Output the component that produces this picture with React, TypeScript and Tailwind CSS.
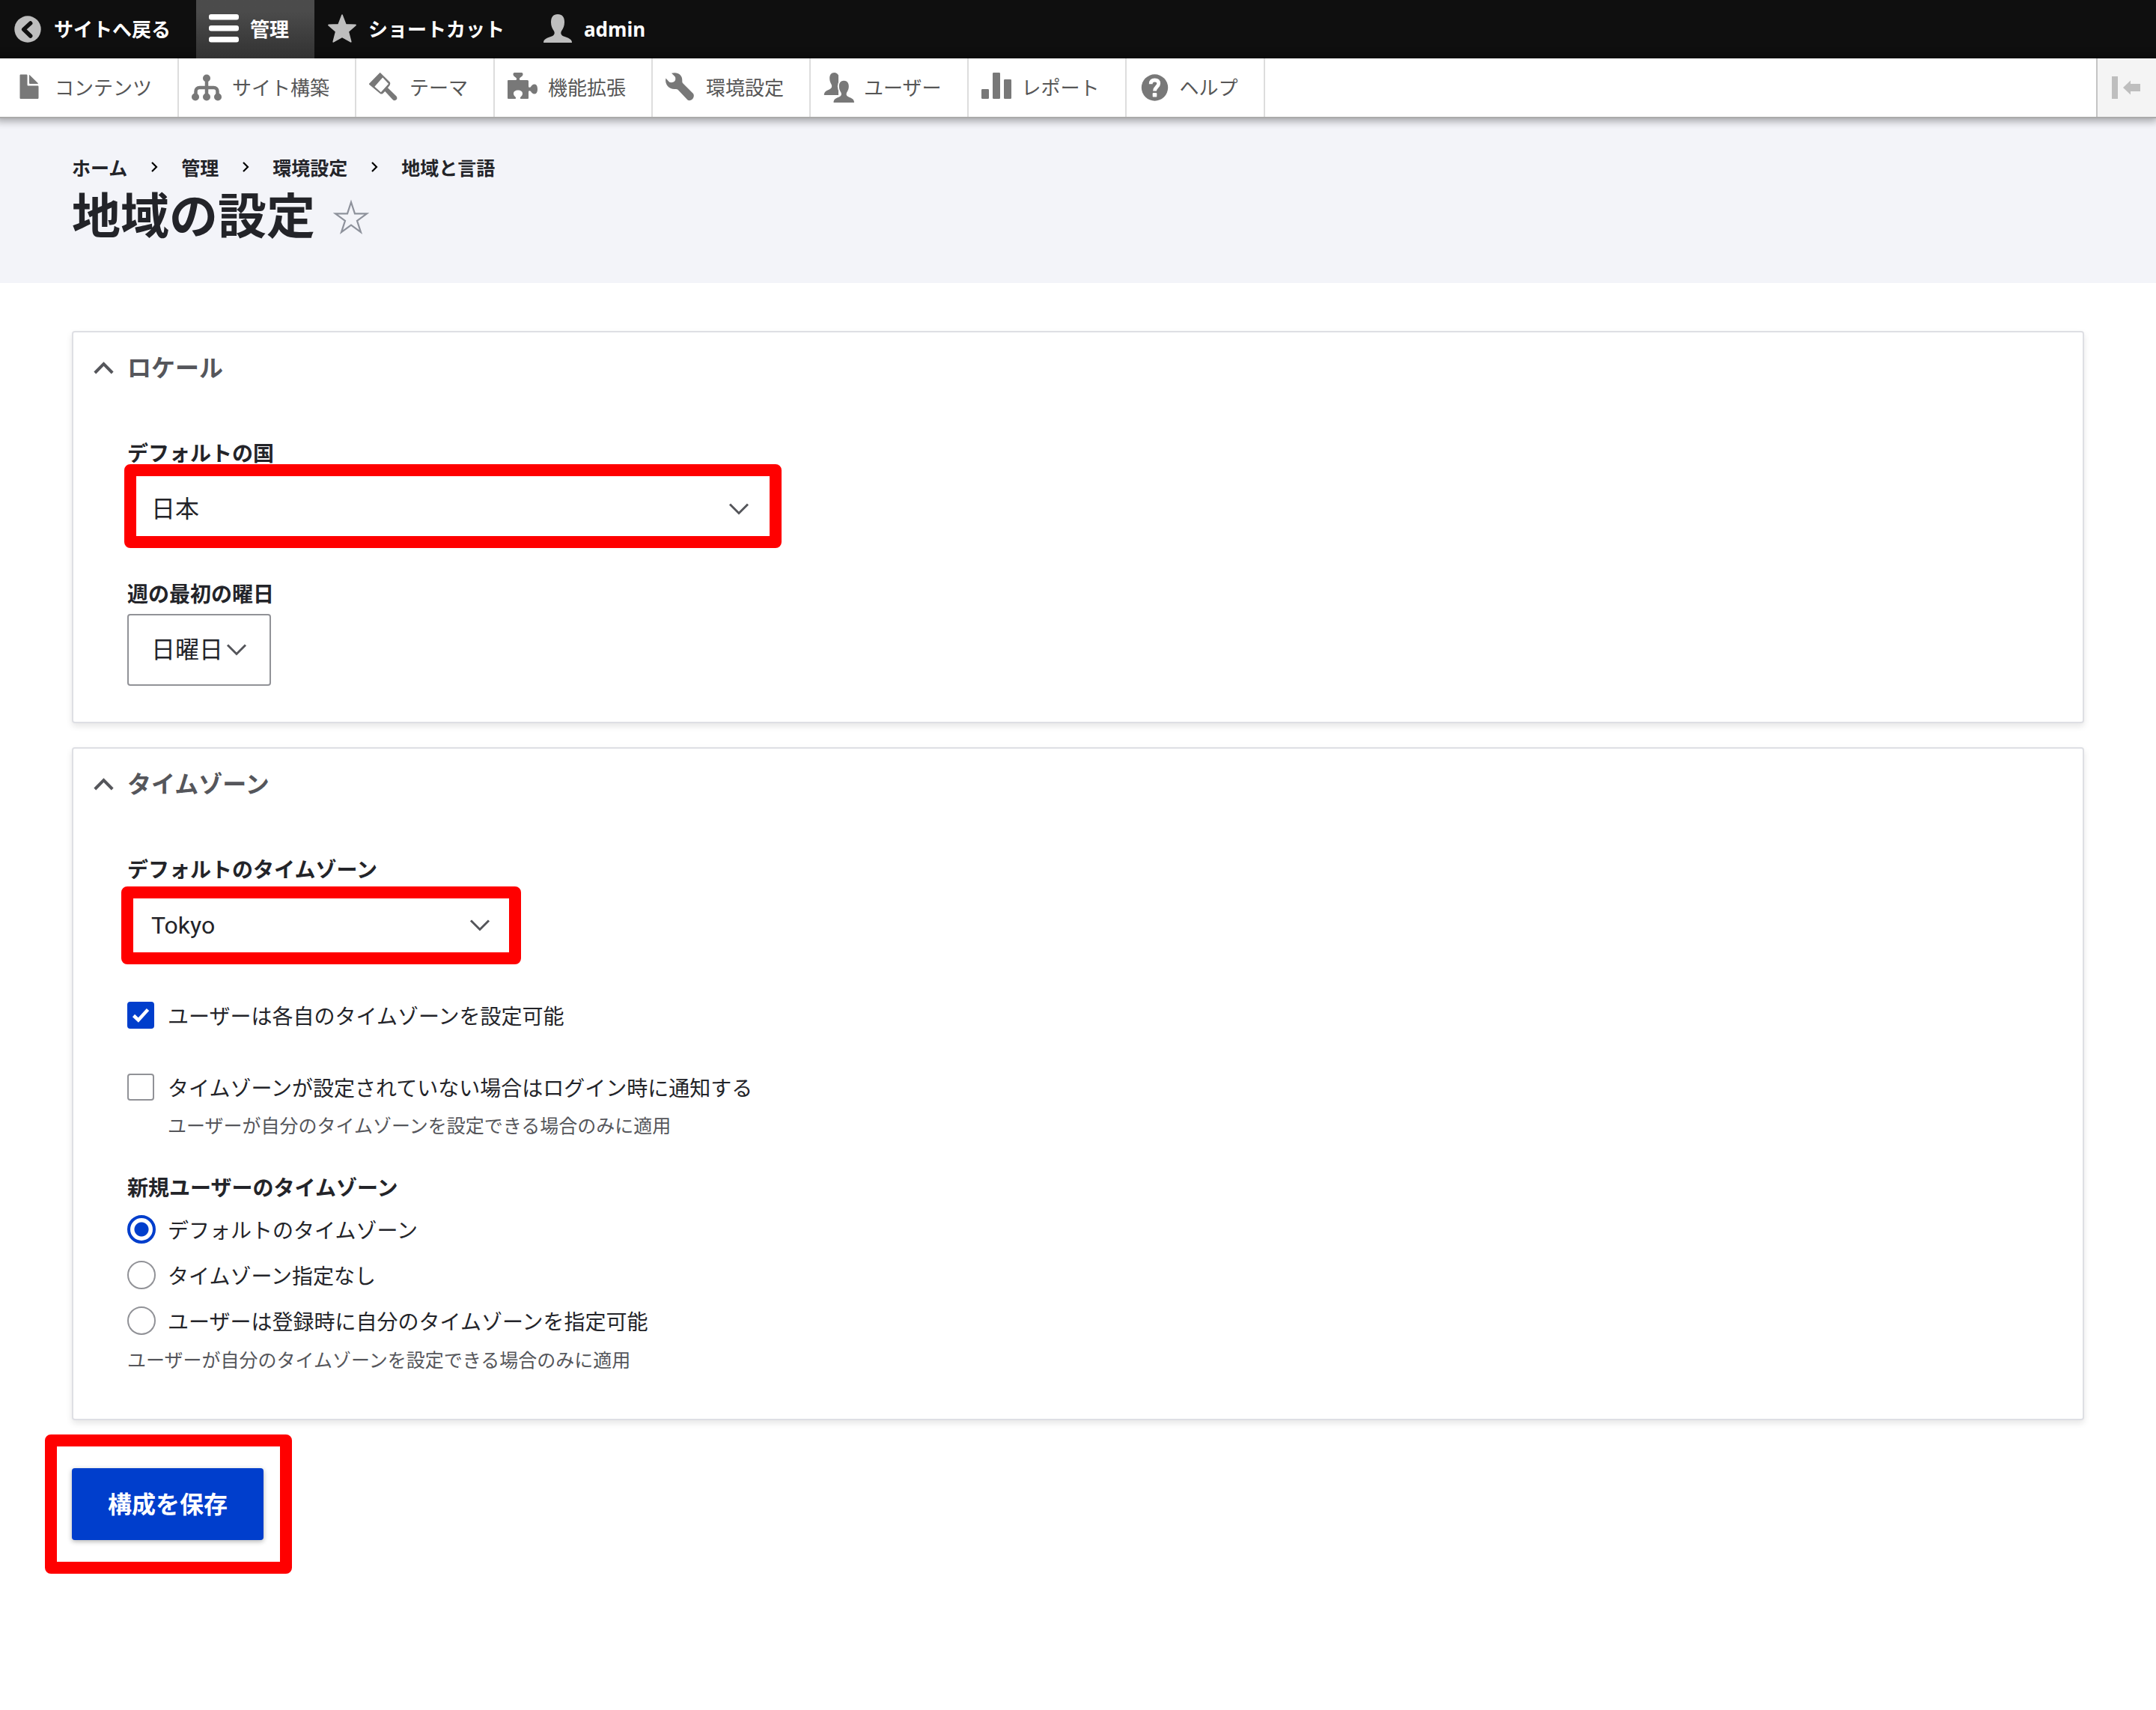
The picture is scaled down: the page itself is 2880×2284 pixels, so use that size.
import { useState } from "react";
import type { ReactNode } from "react";

const trayItems: { label: string; icon: ReactNode }[] = [
  { label: "コンテンツ", icon: <FileIcon /> },
  { label: "サイト構築", icon: <StructureIcon /> },
  { label: "テーマ", icon: <BrushIcon /> },
  { label: "機能拡張", icon: <PuzzleIcon /> },
  { label: "環境設定", icon: <WrenchIcon /> },
  { label: "ユーザー", icon: <PeopleIcon /> },
  { label: "レポート", icon: <BarsIcon /> },
  { label: "ヘルプ", icon: <HelpIcon /> },
];

const breadcrumbs = ["ホーム", "管理", "環境設定", "地域と言語"];

const userTimezoneOptions = [
  { value: "default", label: "デフォルトのタイムゾーン" },
  { value: "empty", label: "タイムゾーン指定なし" },
  { value: "select", label: "ユーザーは登録時に自分のタイムゾーンを指定可能" },
];

export default function App() {
  return (
    <div className="min-h-screen bg-white font-['Noto_Sans_CJK_JP',sans-serif] text-[#232429]">
      <Toolbar />
      <PageHeader />
      <main className="px-24 pt-16 pb-24">
        <form onSubmit={(e) => e.preventDefault()}>
          <div className="flex flex-col gap-8">
            <LocalePanel />
            <TimezonePanel />
          </div>
          <div className="relative mt-16 w-fit">
            <button
              type="submit"
              className="block h-24 rounded bg-[#003ecc] px-12 pb-1 text-[32px] font-bold text-white shadow-[0_2px_6px_rgba(0,0,0,0.3)]"
            >
              構成を保存
            </button>
            <Highlight className="-top-[45px] -right-[38px] -bottom-[45px] -left-9" />
          </div>
        </form>
      </main>
    </div>
  );
}

/* ---------- Toolbar ---------- */

function Toolbar() {
  return (
    <div className="relative z-10 font-['Noto_Sans','Noto_Sans_CJK_JP',sans-serif] text-[26px]">
      <nav className="flex h-[78px] bg-[#0f0f0f] font-bold text-white">
        <BarTab label="サイトへ戻る" icon={<BackIcon />} />
        <BarTab label="管理" icon={<HamburgerIcon />} active />
        <BarTab label="ショートカット" icon={<StarIcon />} />
        <BarTab label="admin" icon={<PersonIcon />} />
      </nav>
      <div className="flex border-b-2 border-[#aaaaaa] bg-white shadow-[-2px_0_10px_4px_rgba(0,0,0,0.33)]">
        <ul className="flex flex-1 pl-0.5">
          {trayItems.map((item) => (
            <li key={item.label} className="border-r-2 border-[#dddddd]">
              <a
                href="#"
                className="flex h-[78px] items-center gap-3.5 pr-[34px] pl-[17px] text-[#565656]"
              >
                <span className="text-[#787878]">{item.icon}</span>
                {item.label}
              </a>
            </li>
          ))}
        </ul>
        <button
          type="button"
          aria-label="垂直方向"
          className="flex w-20 items-center border-l-2 border-[#c4c4c4] bg-[#f4f4f4] pl-[19px]"
        >
          <svg width="40" height="30" viewBox="0 0 40 30" fill="#bebebe">
            <path d="M0 0h8v30H0zM15 15 25 5.5V10h13v10H25v4.5z" />
          </svg>
        </button>
      </div>
    </div>
  );
}

function BarTab({
  label,
  icon,
  active = false,
}: {
  label: string;
  icon: ReactNode;
  active?: boolean;
}) {
  return (
    <a
      href="#"
      className={`flex items-center gap-[15px] pr-[34px] pl-[17px] ${
        active
          ? "bg-linear-to-b from-[#4b4b4b] from-20% to-[#323232] text-white"
          : ""
      }`}
    >
      <span className={active ? "text-white" : "text-[#bebebe]"}>{icon}</span>
      {label}
    </a>
  );
}

/* ---------- Page header ---------- */

function PageHeader() {
  return (
    <header className="bg-[#f3f4f9] px-24 pt-[47px] pb-[51px]">
      <nav aria-label="パンくず">
        <ol className="flex h-9 items-center text-[25px] leading-9 font-bold">
          {breadcrumbs.map((crumb, i) => (
            <li key={crumb} className="flex items-center">
              {i > 0 && (
                <span className="flex w-18 justify-center">
                  <svg width="10" height="14" viewBox="0 0 10 14" fill="none">
                    <path d="m2 1 6 6-6 6" stroke="#000" strokeWidth="2.2" />
                  </svg>
                </span>
              )}
              <a href="#">{crumb}</a>
            </li>
          ))}
        </ol>
      </nav>
      <div className="flex items-center gap-6">
        <h1 className="text-[65px] leading-[86px] font-bold">地域の設定</h1>
        <a href="#" aria-label="ショートカットに追加" className="pt-3">
          <svg width="48" height="48" viewBox="0 0 48 48" fill="none">
            <path
              d="m24 4 5 15.3h16L32 28.8l5 15.3-13-9.5-13 9.5 5-15.3L3 19.3h16z"
              stroke="#8e929c"
              strokeWidth="2.2"
            />
          </svg>
        </a>
      </div>
    </header>
  );
}

/* ---------- Form panels ---------- */

function LocalePanel() {
  return (
    <Panel title="ロケール">
      <FieldLabel htmlFor="country">デフォルトの国</FieldLabel>
      <SelectBox id="country" value="日本" className="w-[863px]">
        <Highlight className="-top-3 -right-[11px] -bottom-1 -left-1" />
      </SelectBox>
      <div className="mt-[46px] mb-12">
        <FieldLabel htmlFor="first-day">週の最初の曜日</FieldLabel>
        <SelectBox id="first-day" value="日曜日" className="w-48" />
      </div>
    </Panel>
  );
}

function TimezonePanel() {
  const [configurable, setConfigurable] = useState(true);
  const [warn, setWarn] = useState(false);
  const [userTimezone, setUserTimezone] = useState("default");

  return (
    <Panel title="タイムゾーン">
      <FieldLabel htmlFor="timezone">デフォルトのタイムゾーン</FieldLabel>
      <SelectBox id="timezone" value="Tokyo" className="w-[517px]">
        <Highlight className="-top-1 -right-[9px] -bottom-1 -left-2" />
      </SelectBox>

      <div className="mt-[54px] flex flex-col gap-[60px]">
        <Checkbox
          label="ユーザーは各自のタイムゾーンを設定可能"
          checked={configurable}
          onChange={setConfigurable}
        />
        <Checkbox
          label="タイムゾーンが設定されていない場合はログイン時に通知する"
          checked={warn}
          onChange={setWarn}
        />
      </div>
      <p className="mt-3.5 pl-[54px] text-[25px] leading-9 text-[#55565b]">
        ユーザーが自分のタイムゾーンを設定できる場合のみに適用
      </p>

      <fieldset className="mt-[47px] mb-[62px]">
        <legend className="text-[28px] leading-9 font-bold">
          新規ユーザーのタイムゾーン
        </legend>
        <div className="mt-5 flex flex-col gap-[23px]">
          {userTimezoneOptions.map((option) => (
            <label
              key={option.value}
              className="flex h-[38px] w-fit items-center gap-4 text-[28px] leading-9"
            >
              <input
                type="radio"
                name="user-timezone"
                value={option.value}
                checked={userTimezone === option.value}
                onChange={() => setUserTimezone(option.value)}
                className="size-[38px] appearance-none rounded-full border-2 border-[#919297] bg-white checked:border-4 checked:border-[#003ecc] checked:bg-[radial-gradient(circle,#003ecc_9px,#ffffff_10px)]"
              />
              {option.label}
            </label>
          ))}
        </div>
        <p className="mt-3.5 text-[25px] leading-9 text-[#55565b]">
          ユーザーが自分のタイムゾーンを設定できる場合のみに適用
        </p>
      </fieldset>
    </Panel>
  );
}

function Panel({ title, children }: { title: string; children: ReactNode }) {
  return (
    <details
      open
      className="group rounded border-2 border-[#dedfe4] bg-white shadow-[0_4px_8px_rgba(0,0,0,0.1)]"
    >
      <summary className="flex list-none items-center gap-[18px] pl-[27px] text-[32px] leading-[90px] font-bold text-[#55565b]">
        <svg
          width="27"
          height="22"
          viewBox="0 0 27 22"
          fill="none"
          className="rotate-180 group-open:rotate-0"
        >
          <path d="M1.8 20 13.5 8.2 25.2 20" stroke="#55565b" strokeWidth="4" />
        </svg>
        {title}
      </summary>
      <div className="flow-root px-[72px] pt-[52px]">{children}</div>
    </details>
  );
}

function FieldLabel({
  htmlFor,
  children,
}: {
  htmlFor: string;
  children: ReactNode;
}) {
  return (
    <label htmlFor={htmlFor} className="block text-[28px] leading-9 font-bold">
      {children}
    </label>
  );
}

function SelectBox({
  id,
  value,
  className,
  children,
}: {
  id: string;
  value: string;
  className: string;
  children?: ReactNode;
}) {
  return (
    <div className={`relative mt-2.5 max-w-full ${className}`}>
      <select
        id={id}
        defaultValue={value}
        className="block h-24 w-full appearance-none rounded border-2 border-[#919297] bg-white pl-[30px] font-[Roboto,'Noto_Sans_CJK_JP',sans-serif] text-[32px]"
      >
        <option value={value}>{value}</option>
      </select>
      <svg
        width="28"
        height="16"
        viewBox="0 0 28 16"
        fill="none"
        className="pointer-events-none absolute top-10 right-8"
      >
        <path d="m2 1.5 12 12 12-12" stroke="#55565b" strokeWidth="3" />
      </svg>
      {children}
    </div>
  );
}

function Checkbox({
  label,
  checked,
  onChange,
}: {
  label: string;
  checked: boolean;
  onChange: (checked: boolean) => void;
}) {
  return (
    <label className="flex h-9 w-fit items-center gap-[18px] text-[28px] leading-9">
      <span className="relative size-9">
        <input
          type="checkbox"
          checked={checked}
          onChange={(e) => onChange(e.target.checked)}
          className="block size-9 appearance-none rounded border-2 border-[#919297] bg-white checked:border-[#003ecc] checked:bg-[#003ecc]"
        />
        {checked && (
          <svg
            viewBox="0 0 36 36"
            fill="none"
            className="pointer-events-none absolute inset-0"
          >
            <path d="m8.5 18.5 6.3 6 12.7-14" stroke="#fff" strokeWidth="4.5" />
          </svg>
        )}
      </span>
      {label}
    </label>
  );
}

// Red callout frame drawn over a control
function Highlight({ className }: { className: string }) {
  return (
    <div
      className={`pointer-events-none absolute rounded-lg border-16 border-[#ff0000] ${className}`}
    />
  );
}

/* ---------- Icons ---------- */

function Icon({ children }: { children: ReactNode }) {
  return (
    <svg width="40" height="40" viewBox="0 0 40 40" fill="currentColor" overflow="visible">
      {children}
    </svg>
  );
}

function BackIcon() {
  return (
    <Icon>
      <circle cx="20" cy="20" r="17.7" />
      <path
        d="m23.7 12-9 8.2 9 8.8"
        fill="none"
        stroke="#0f0f0f"
        strokeWidth="5.5"
        strokeLinejoin="round"
        strokeLinecap="round"
      />
    </Icon>
  );
}

function HamburgerIcon() {
  return (
    <Icon>
      <rect y="0" width="40" height="7.5" rx="3" />
      <rect y="15" width="40" height="7.5" rx="3" />
      <rect y="30" width="40" height="7.5" rx="3" />
    </Icon>
  );
}

function StarIcon() {
  return (
    <Icon>
      <path
        d="m20 1.2 4.8 12.6 13.2.7-9.8 8.7 3.5 13.6L20 30.3 8.3 36.8l3.5-13.6L2 14.5l13.2-.7z"
        stroke="currentColor"
        strokeWidth="1.8"
        strokeLinejoin="round"
      />
    </Icon>
  );
}

function PersonIcon() {
  return (
    <Icon>
      <path d="M20 0c-6 0-9 4-9 10.5 0 5 1.5 8 4 12 1.5 3 .5 5.5-3 7-6 2-11 3.5-11 8.5h38c0-5-5-6.5-11-8.5-3.500-1.5-4.500-4-3-7 2.5-4 4-7 4-12C29 4 26 0 20 0z" />
    </Icon>
  );
}

function FileIcon() {
  return (
    <Icon>
      <path
        transform="scale(2.5)"
        d="M12.502 7h-5c-.276 0-.502-.225-.502-.5v-5c0-.275-.225-.5-.5-.5h-3c-.275 0-.5.225-.5.5v12c0 .275.225.5.5.5h9.002c.275 0 .5-.225.5-.5v-6c0-.275-.225-.5-.5-.5zM8.502 6h4c.275 0 .34-.159.146-.354l-4.293-4.292c-.195-.195-.353-.129-.353.146v4c0 .275.225.5.5.5z"
      />
    </Icon>
  );
}

function StructureIcon() {
  return (
    <Icon>
      <circle cx="20" cy="7.5" r="5" />
      <circle cx="5" cy="32.5" r="5" />
      <circle cx="20" cy="32.5" r="5" />
      <circle cx="35" cy="32.5" r="5" />
      <path
        d="M20 8v24M5.5 31v-6a5 5 0 0 1 5-5h19a5 5 0 0 1 5 5v6"
        fill="none"
        stroke="currentColor"
        strokeWidth="4.5"
      />
    </Icon>
  );
}

function BrushIcon() {
  return (
    <Icon>
      <path
        fillRule="evenodd"
        d="M.3 14.5 14 .4q.7-.7 1.4 0l12.200 12.100q2.200 3.500-2.600 7.800l11.500 11.200c1.5 2 1 4-.5 5s-3 1-4.500-.5L21.300 25l-3 3q-2 1-3.500 0L.3 16q-.8-.7 0-1.500zm7.100 4.300 8.400 7.400L26 15l-7.800-8.500z"
      />
    </Icon>
  );
}

function PuzzleIcon() {
  return (
    <Icon>
      <path d="M0 11q0-1 1-1h9.500c2 0 2-1.500 1-3C10 5.500 7.500 5 7.500 2 7.500.5 8.500 0 10 0h8c1.500 0 2.500.5 2.500 2 0 3-2.500 3.500-4 5-1 1.500-1 3 1 3h9q1.500 0 1.500 1.500V18c0 2 1.500 2.500 3 1 1.500-2 2.500-3.500 5-3.500 3 0 4 3 4 6.500s-1 6.500-4 6.500c-2.500 0-3.500-1.500-5-3.500-1.500-1.500-3-1-3 1v8q0 1-1 1h-9c-1.500 0-1.500-1-.5-2.500 1.500-1.500 2.500-2.500 2.500-4.500 0-3-2.500-4.500-6-4.500S8 25 8 28c0 2 1 3 2.500 4.500 1 1.500 1 2.500-.5 2.500H1q-1 0-1-1z" />
    </Icon>
  );
}

function WrenchIcon() {
  return (
    <Icon>
      <path d="M8 .8C16-1.500 22.500 3 22.300 10c0 2 0 3 .7 4L37 28c1.500 2 .8 5-.5 6.800-1.500 2-5 3.200-7 1.700l-13-13.800C15 21.500 13.500 22 12 22 5 22-1.500 16 .4 7.500L4.500 12c1.500 1.500 3.500 1.300 5.500.7 2.500-.8 3.500-2.500 3.300-4.700 0-2-.5-2.500-2-4z" />
    </Icon>
  );
}

function PeopleIcon() {
  return (
    <Icon>
      <path d="M14.500 0c-4.200 0-6.300 3-6.300 7.500 0 3.500 1 5.500 2.500 8.500 1 2.500.5 4.500-2 6C4.500 24 .8 25 .8 30H20V3.500C18.800 1.200 17 0 14.500 0z" />
      <path
        d="M27.300 10.700c-4.200 0-6.500 3-6.500 7.500 0 3.500 1 5.500 2.700 8.500 1 2.500.3 4.500-2.200 5.500-4 1.800-7.800 2.800-7.800 7.800H41c0-5-3.800-6-7.800-7.800-2.500-1-3.200-3-2.200-5.500 1.700-3 2.800-5 2.800-8.500 0-4.500-2.300-7.500-6.500-7.500z"
        stroke="#fff"
        strokeWidth="4"
        paintOrder="stroke"
      />
    </Icon>
  );
}

function BarsIcon() {
  return (
    <Icon>
      <rect x="0" y="22" width="10" height="13" rx="1.2" />
      <rect x="15" y="0" width="10" height="35" rx="1.2" />
      <rect x="30" y="9" width="10" height="26" rx="1.2" />
    </Icon>
  );
}

function HelpIcon() {
  return (
    <Icon>
      <circle cx="20.5" cy="20" r="17.7" />
      <path
        d="M15.200 15.200c0-3.500 2-5.200 5.300-5.200s5.200 1.700 5.200 4.800c0 4-5.200 4.700-5.200 9.700"
        fill="none"
        stroke="#fff"
        strokeWidth="4.8"
      />
      <rect x="17.7" y="27" width="5.6" height="5.6" rx="1.2" fill="#fff" />
    </Icon>
  );
}
